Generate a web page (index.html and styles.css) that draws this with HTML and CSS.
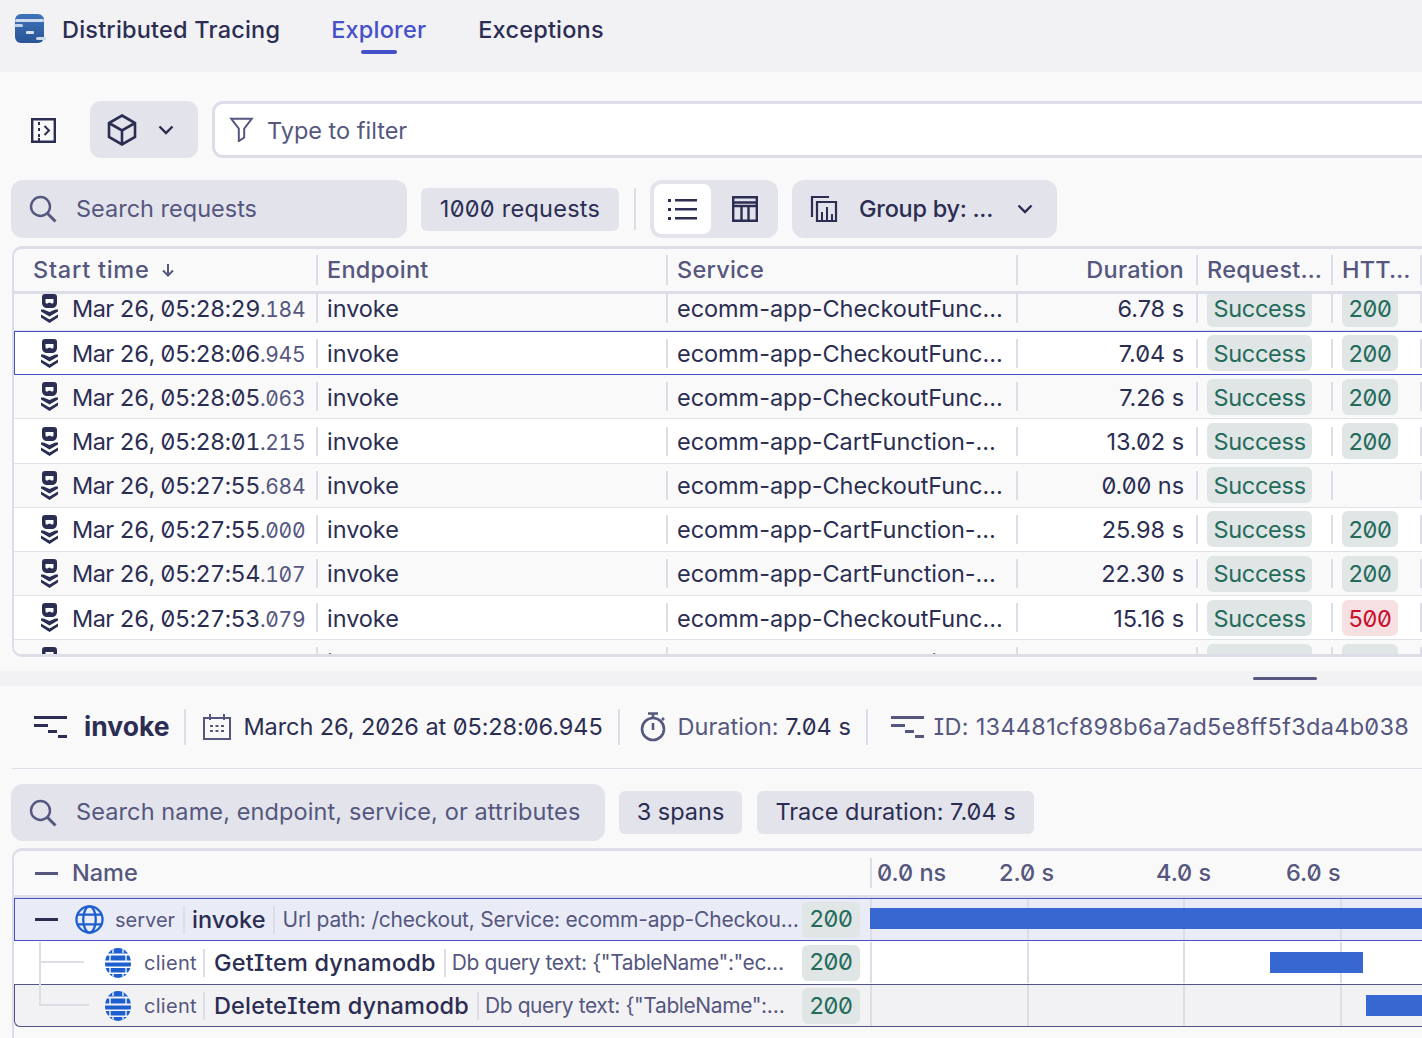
FILE: index.html
```html
<!DOCTYPE html>
<html lang="en">
<head>
<meta charset="utf-8">
<title>Distributed Tracing</title>
<link rel="stylesheet" href="styles.css">
</head>
<body>
<svg class="defs" aria-hidden="true">
  <defs>
    <linearGradient id="logo-grad" x1="0" y1="0" x2="0" y2="1"><stop offset="0" stop-color="#3f74ba"/><stop offset="1" stop-color="#2a5496"/></linearGradient>
    <clipPath id="db-clip"><ellipse cx="13" cy="15" rx="13" ry="15"/></clipPath>
  </defs>
  <symbol id="i-span" viewBox="0 0 17 29">
    <path fill="currentColor" d="M4 0h9a3 3 0 0 1 3 3v6c0 3-2.500 5-5 5H6c-2.500 0-5-2-5-5V3a3 3 0 0 1 3-3z"/>
    <path fill="#fff" d="M4.500 5h8v3c0 1-.7 1.600-1.400 1.600C9.900 9.600 9.500 8.500 8.500 8.500s-1.400 1.100-2.600 1.100C5.200 9.600 4.500 9 4.500 8z"/>
    <path fill="currentColor" d="M0 15.500h2.500L8.500 18l6-2.500H17v2l-8.500 5-8.500-5zM0 20.500l8.500 5 8.500-5v3l-8.500 5.500L0 23.500z"/>
  </symbol>
  <symbol id="i-search" viewBox="0 0 28 28"><circle cx="11.500" cy="11.500" r="9.500" fill="none" stroke="currentColor" stroke-width="2.400"/><path d="M18.500 18.500l8 8" stroke="currentColor" stroke-width="3" fill="none"/></symbol>
  <symbol id="i-chev" viewBox="0 0 16 10"><path d="M1.500 1.500L8 8l6.500-6.500" fill="none" stroke="currentColor" stroke-width="2.400"/></symbol>
  <symbol id="i-trace" viewBox="0 0 34 22"><path fill="currentColor" d="M0 0h33v3H0zM0 8h14v3H0zM14 14h9v3h-9zM24 19h9v3h-9z"/></symbol>
  <symbol id="i-globe" viewBox="0 0 30 30"><g fill="none" stroke="#1e5fd0" stroke-width="2.400"><circle cx="15" cy="15" r="13.500"/><ellipse cx="15" cy="15" rx="6.500" ry="13.500"/><path d="M2.500 10h25M2.500 20h25"/></g></symbol>
  <symbol id="i-db" viewBox="0 0 26 30"><g clip-path="url(#db-clip)"><path fill="#1e5fd0" d="M0 0h26v5.500H0zM0 7.500h26v5H0zM0 14.500h26v4H0zM0 20h26v4.500H0zM0 26h26v4H0z"/><path stroke="#fff" stroke-width="1.300" fill="none" d="M8 0v5M18 0v5M5 7v6M21 7v6M5 20v5M21 20v5M8 26v4M18 26v4"/></g></symbol>
</svg>

<header class="topbar">
  <svg class="logo" viewBox="0 0 32 30" aria-hidden="true">
    <rect x="1" y="0" width="29" height="29" rx="6" fill="url(#logo-grad)"/>
    <rect x="1" y="5" width="29" height="3" rx="1.500" fill="#cddbec"/>
    <rect x="0" y="10" width="9" height="3" rx="1.500" fill="#c3d4e8"/>
    <rect x="12" y="17" width="8" height="3" rx="1" fill="#d6e1ef"/>
    <rect x="22" y="23" width="10" height="3" rx="1.500" fill="#c9d8ea"/>
  </svg>
  <h1 class="app-title">Distributed Tracing</h1>
  <nav class="tabs">
    <a class="tab tab-active">Explorer</a>
    <a class="tab">Exceptions</a>
  </nav>
</header>

<main class="upper">
  <div class="filter-bar">
    <button class="plain-btn" aria-label="Toggle sidebar">
      <svg class="ic-25" viewBox="0 0 25 25"><path fill="none" stroke="currentColor" stroke-width="2.400" d="M1.200 1.200h22.600v22.600H1.200z"/><path fill="none" stroke="currentColor" stroke-width="2" d="M8 4v3M8 10v3M8 16v3M8 20v3M13.500 8l4.500 4.500-4.500 4.500"/></svg>
    </button>
    <button class="entity-btn" aria-label="Entity">
      <svg class="ic-cube" viewBox="0 0 30 32"><path fill="none" stroke="currentColor" stroke-width="2.600" d="M15 1.500l13 7.500v14l-13 7.500L2 23V9zM2 9l13 7.500L28 9M15 16.500v14"/></svg>
      <svg class="ic-chev"><use href="#i-chev"/></svg>
    </button>
    <div class="filter-input">
      <svg class="ic-25" viewBox="0 0 26 28"><path fill="none" stroke="currentColor" stroke-width="2.200" d="M1.500 2h23L16 13v10l-6 4V13z"/></svg>
      <span class="placeholder">Type to filter</span>
    </div>
  </div>

  <div class="tool-bar">
    <div class="search search-req">
      <svg class="ic-search"><use href="#i-search"/></svg>
      <span class="placeholder">Search requests</span>
    </div>
    <span class="chip chip-req">1000 requests</span>
    <span class="vsep"></span>
    <div class="toggle">
      <button class="toggle-btn toggle-on" aria-label="List">
        <svg class="ic-30" viewBox="0 0 30 24"><path fill="currentColor" d="M0 2h3v3H0zM7 2h22v2.600H7zM0 11h3v3H0zM7 11h22v2.600H7zM0 20h3v3H0zM7 20h22v2.600H7z"/></svg>
      </button>
      <button class="toggle-btn" aria-label="Table">
        <svg class="ic-table" viewBox="0 0 26 26"><path fill="none" stroke="currentColor" stroke-width="2.400" d="M1.200 1.200h23.600v23.600H1.200zM1.200 6.500h23.600M1.200 10h23.600M9.500 10v15M16.500 10v15"/></svg>
      </button>
    </div>
    <button class="group-btn">
      <svg class="ic-28" viewBox="0 0 28 28"><path fill="none" stroke="currentColor" stroke-width="2.200" d="M19 2H2v20M7 7h19v19H7z"/><path fill="none" stroke="currentColor" stroke-width="2" d="M12 26V17M17 26V12M22 26v-7"/></svg>
      <span class="group-label">Group by: ...</span>
      <svg class="ic-chev"><use href="#i-chev"/></svg>
    </button>
  </div>

  <section class="req-table">
    <div class="req-row req-head">
      <div class="cell first head-first"><span class="head-start">Start time</span>
        <svg class="ic-arrow" viewBox="0 0 14 14"><path fill="none" stroke="currentColor" stroke-width="2" d="M7 1v11M2 7.500l5 5 5-5"/></svg>
      </div>
      <div class="cell">Endpoint</div>
      <div class="cell">Service</div>
      <div class="cell num">Duration</div>
      <div class="cell">Request…</div>
      <div class="cell">HTT…</div>
      <div class="cell"></div>
    </div>
    <div class="req-body">
      <div class="req-row row-alt row-scrolled">
        <div class="cell first"><svg class="ic-span"><use href="#i-span"/></svg><span class="stamp">Mar 26, 05:28:29<small>.184</small></span></div>
        <div class="cell">invoke</div><div class="cell">ecomm-app-CheckoutFunc…</div><div class="cell num">6.78 s</div>
        <div class="cell"><span class="tag ok">Success</span></div><div class="cell"><span class="tag ok">200</span></div><div class="cell"></div>
      </div>
      <div class="req-row row-selected">
        <div class="cell first"><svg class="ic-span"><use href="#i-span"/></svg><span class="stamp">Mar 26, 05:28:06<small>.945</small></span></div>
        <div class="cell">invoke</div><div class="cell">ecomm-app-CheckoutFunc…</div><div class="cell num">7.04 s</div>
        <div class="cell"><span class="tag ok">Success</span></div><div class="cell"><span class="tag ok">200</span></div><div class="cell"></div>
      </div>
      <div class="req-row row-alt">
        <div class="cell first"><svg class="ic-span"><use href="#i-span"/></svg><span class="stamp">Mar 26, 05:28:05<small>.063</small></span></div>
        <div class="cell">invoke</div><div class="cell">ecomm-app-CheckoutFunc…</div><div class="cell num">7.26 s</div>
        <div class="cell"><span class="tag ok">Success</span></div><div class="cell"><span class="tag ok">200</span></div><div class="cell"></div>
      </div>
      <div class="req-row">
        <div class="cell first"><svg class="ic-span"><use href="#i-span"/></svg><span class="stamp">Mar 26, 05:28:01<small>.215</small></span></div>
        <div class="cell">invoke</div><div class="cell">ecomm-app-CartFunction-…</div><div class="cell num">13.02 s</div>
        <div class="cell"><span class="tag ok">Success</span></div><div class="cell"><span class="tag ok">200</span></div><div class="cell"></div>
      </div>
      <div class="req-row row-alt">
        <div class="cell first"><svg class="ic-span"><use href="#i-span"/></svg><span class="stamp">Mar 26, 05:27:55<small>.684</small></span></div>
        <div class="cell">invoke</div><div class="cell">ecomm-app-CheckoutFunc…</div><div class="cell num">0.00 ns</div>
        <div class="cell"><span class="tag ok">Success</span></div><div class="cell"></div><div class="cell"></div>
      </div>
      <div class="req-row">
        <div class="cell first"><svg class="ic-span"><use href="#i-span"/></svg><span class="stamp">Mar 26, 05:27:55<small>.000</small></span></div>
        <div class="cell">invoke</div><div class="cell">ecomm-app-CartFunction-…</div><div class="cell num">25.98 s</div>
        <div class="cell"><span class="tag ok">Success</span></div><div class="cell"><span class="tag ok">200</span></div><div class="cell"></div>
      </div>
      <div class="req-row row-alt">
        <div class="cell first"><svg class="ic-span"><use href="#i-span"/></svg><span class="stamp">Mar 26, 05:27:54<small>.107</small></span></div>
        <div class="cell">invoke</div><div class="cell">ecomm-app-CartFunction-…</div><div class="cell num">22.30 s</div>
        <div class="cell"><span class="tag ok">Success</span></div><div class="cell"><span class="tag ok">200</span></div><div class="cell"></div>
      </div>
      <div class="req-row">
        <div class="cell first"><svg class="ic-span"><use href="#i-span"/></svg><span class="stamp">Mar 26, 05:27:53<small>.079</small></span></div>
        <div class="cell">invoke</div><div class="cell">ecomm-app-CheckoutFunc…</div><div class="cell num">15.16 s</div>
        <div class="cell"><span class="tag ok">Success</span></div><div class="cell"><span class="tag err">500</span></div><div class="cell"></div>
      </div>
      <div class="req-row row-alt">
        <div class="cell first"><svg class="ic-span"><use href="#i-span"/></svg><span class="stamp">Mar 26, 05:27:53<small>.012</small></span></div>
        <div class="cell">invoke</div><div class="cell">ecomm-app-CartFunction-…</div><div class="cell num">27.12 s</div>
        <div class="cell"><span class="tag ok">Success</span></div><div class="cell"><span class="tag ok">200</span></div><div class="cell"></div>
      </div>
    </div>
  </section>
</main>

<div class="splitter"><span class="handle"></span></div>

<section class="lower">
  <div class="trace-head">
    <svg class="ic-trace"><use href="#i-trace"/></svg>
    <strong class="trace-name">invoke</strong>
    <span class="hsep"></span>
    <svg class="ic-cal" viewBox="0 0 28 26"><path fill="none" stroke="currentColor" stroke-width="2" d="M1 4h26v21H1zM7 0v6M21 0v6"/><path fill="currentColor" d="M7 11h3v2H7zM12.500 11h3v2h-3zM18 11h3v2h-3zM7 16h3v2H7zM12.500 16h3v2h-3zM18 16h3v2h-3z"/></svg>
    <span class="trace-date">March 26, 2026 at 05:28:06.945</span>
    <span class="hsep"></span>
    <svg class="ic-watch" viewBox="0 0 26 30"><circle cx="13" cy="17" r="11" fill="none" stroke="currentColor" stroke-width="2.600"/><path fill="none" stroke="currentColor" stroke-width="2.600" d="M8 1.500h10M13 2v4M13 11v7M22 6l2 2"/></svg>
    <span class="trace-meta">Duration: <b>7.04 s</b></span>
    <span class="hsep"></span>
    <svg class="ic-trace ic-trace-sec"><use href="#i-trace"/></svg>
    <span class="trace-meta trace-id">ID: 134481cf898b6a7ad5e8ff5f3da4b038</span>
    <svg class="ic-copy" viewBox="0 0 20 20"><path fill="none" stroke="currentColor" stroke-width="2.400" d="M1 1h18v18H1z"/></svg>
  </div>

  <div class="tool-bar tool-bar-lower">
    <div class="search search-span">
      <svg class="ic-search"><use href="#i-search"/></svg>
      <span class="placeholder">Search name, endpoint, service, or attributes</span>
    </div>
    <span class="chip chip-spans">3 spans</span>
    <span class="chip chip-dur">Trace duration: 7.04 s</span>
  </div>

  <section class="span-table">
    <div class="span-row span-head">
      <div class="span-name"><span class="dash dash-head"></span><span class="head-name">Name</span></div>
      <div class="axis">
        <span class="tick" style="left:5px">0.0 ns</span>
        <span class="tick" style="left:127px">2.0 s</span>
        <span class="tick" style="left:284px">4.0 s</span>
        <span class="tick" style="left:414px">6.0 s</span>
      </div>
    </div>
    <div class="span-row span-root">
      <div class="span-name">
        <span class="dash"></span>
        <svg class="ic-globe"><use href="#i-globe"/></svg>
        <span class="kind">server</span>
        <span class="nm">invoke</span>
        <span class="desc">Url path: /checkout, Service: ecomm-app-Checkou…</span>
        <span class="tag ok span-tag">200</span>
      </div>
      <div class="gantt"><span class="bar" style="left:0;width:553px"></span></div>
    </div>
    <div class="span-row span-child">
      <div class="span-name">
        <span class="tree tree-a"></span>
        <svg class="ic-db"><use href="#i-db"/></svg>
        <span class="kind">client</span>
        <span class="nm">GetItem dynamodb</span>
        <span class="desc">Db query text: {"TableName":"ec…</span>
        <span class="tag ok span-tag">200</span>
      </div>
      <div class="gantt"><span class="bar" style="left:400px;width:93px"></span></div>
    </div>
    <div class="span-row span-child span-hover">
      <div class="span-name">
        <span class="tree tree-b"></span>
        <svg class="ic-db"><use href="#i-db"/></svg>
        <span class="kind">client</span>
        <span class="nm">DeleteItem dynamodb</span>
        <span class="desc">Db query text: {"TableName":…</span>
        <span class="tag ok span-tag">200</span>
      </div>
      <div class="gantt"><span class="bar" style="left:496px;width:60px"></span></div>
    </div>
  </section>
</section>
</body>
</html>
```

FILE: styles.css
```css
:root {
  --ink: #2b2e52;
  --muted: #55577e;
  --line: #dddde8;
  --line-soft: #e1e1ea;
  --fill: #e3e3ec;
  --page: #f9f9fa;
  --band: #f2f2f5;
  --accent: #4650c8;
  --blue: #3767d1;
}
* { box-sizing: border-box; }
html, body { margin: 0; height: 100%; }
body {
  width: 1422px;
  height: 1038px;
  overflow: hidden;
  background: var(--page);
  color: var(--ink);
  font-family: Inter, "Noto Sans", sans-serif;
  font-size: 23.500px;
  font-feature-settings: "zero" 1, "cv08" 1;
  line-height: 1.2;
}
button { font: inherit; color: inherit; border: 0; background: none; padding: 0; cursor: pointer; }
.defs { position: absolute; width: 0; height: 0; }

.topbar { height: 72px; background: var(--band); display: flex; align-items: center; padding-left: 14px; }
.logo { width: 32px; height: 30px; margin-top: -14px; flex: none; }
.app-title { font: inherit; font-weight: 500; margin: -12px 0 0 16px; letter-spacing: .2px; }
.tabs { display: flex; gap: 52px; margin: -12px 0 0 51px; letter-spacing: .2px; }
.tab { position: relative; font-weight: 500; }
.tab-active { color: var(--accent); }
.tab-active::after { content: ""; position: absolute; left: 30px; width: 36px; height: 4px; bottom: -10px; background: var(--accent); border-radius: 2px; }

.upper { height: 599px; overflow: hidden; }
.filter-bar { display: flex; align-items: center; height: 57px; margin-top: 29px; }
.plain-btn { display: flex; margin: 2px 34px 0 31px; }
.ic-25 { width: 25px; height: 25px; flex: none; }
.ic-28 { width: 28px; height: 28px; flex: none; }
.ic-30 { width: 30px; height: 30px; flex: none; }
.ic-cube { width: 30px; height: 32px; flex: none; }
.ic-table { width: 26px; height: 26px; flex: none; }
.ic-chev { width: 16px; height: 10px; flex: none; }
.entity-btn { display: flex; align-items: center; gap: 21px; width: 108px; height: 57px; padding-left: 17px; background: var(--fill); border-radius: 11px; }
.filter-input { flex: 1; margin-left: 14px; margin-right: -20px; height: 57px; background: #fff; border: 3px solid var(--line); border-radius: 11px; display: flex; align-items: center; gap: 13px; padding-left: 14px; color: var(--muted); }
.filter-input .placeholder { padding-top: 3px; }
.placeholder { color: var(--muted); }

.tool-bar { display: flex; align-items: center; margin-top: 22px; padding-left: 11px; height: 58px; }
.search { display: flex; align-items: center; background: var(--fill); border-radius: 12px; height: 58px; padding-left: 18px; gap: 19px; color: var(--muted); }
.ic-search { width: 28px; height: 28px; flex: none; }
.search-req { width: 396px; }
.chip { display: flex; align-items: center; justify-content: center; height: 43px; background: var(--fill); border-radius: 6px; }
.chip-req { width: 198px; margin-left: 14px; letter-spacing: .25px; }
.vsep { width: 2px; height: 42px; background: var(--line); margin: 0 14px 0 15px; }
.toggle { display: flex; align-items: center; width: 128px; height: 58px; background: var(--fill); border-radius: 12px; padding: 4px; gap: 5px; }
.toggle-btn { width: 57px; height: 50px; display: flex; align-items: center; justify-content: center; border-radius: 8px; }
.toggle-on { background: #fff; }
.group-btn { display: flex; align-items: center; width: 265px; height: 58px; margin-left: 14px; padding-left: 18px; background: var(--fill); border-radius: 12px; font-weight: 500; }
.group-label { margin: 0 24px 0 21px; white-space: nowrap; letter-spacing: -.28px; }

.req-table { margin: 8px -20px 0 12px; height: 411px; border: 3px solid var(--line); border-left-width: 2px; border-right: 0; border-radius: 10px 0 0 10px; overflow: hidden; }
.req-row { display: grid; grid-template-columns: 302px 350px 350px 180px 135px 89px 21px; height: 44.170px; align-items: center; }
.req-head { height: 45px; border-bottom: 3px solid var(--line); color: var(--muted); font-weight: 500; letter-spacing: .25px; }
.req-head .cell { height: 30px; }
.head-start { letter-spacing: .75px; }
.req-body { height: 360px; overflow: hidden; background: #fff; }
.row-scrolled { margin-top: -7px; }
.req-body .req-row { border-bottom: 1.500px solid var(--line-soft); }
.req-body .cell { padding-top: 2px; letter-spacing: -.05px; }
.row-alt { background: var(--page); }
.row-selected { background: #fff; outline: 1px solid var(--accent); outline-offset: -1px; position: relative; border-bottom: 0 !important; }
.cell { display: flex; align-items: center; height: 29px; padding-left: 9px; border-left: 2px solid var(--line); white-space: nowrap; min-width: 0; }
.cell.first { border-left: 0; padding-left: 27px; gap: 14px; }
.cell.head-first { padding-left: 19px; gap: 11px; }
.cell.num { justify-content: flex-end; padding-right: 12px; }
.stamp { font-feature-settings: "zero" 1, "tnum" 1; letter-spacing: -.55px; }
.cell small { font-size: 21px; color: var(--muted); letter-spacing: -.3px; }
.ic-span { width: 17px; height: 29px; flex: none; color: var(--ink); margin-top: -2px; }
.ic-arrow { width: 14px; height: 14px; }
.tag { display: inline-flex; align-items: center; justify-content: center; height: 36px; padding: 0 6.500px; border-radius: 6px; letter-spacing: -.3px; }
.req-body .tag { margin-top: -2px; padding-top: 2px; }
.ok { background: #e0e6e5; color: #246b5c; }
.err { background: #f7e0e2; color: #c8102e; }

.splitter { height: 15px; background: var(--band); position: relative; }
.handle { position: absolute; left: 1253px; top: 6px; width: 64px; height: 3px; background: var(--muted); border-radius: 2px; }

.lower { padding-left: 12px; }
.trace-head { display: flex; align-items: center; height: 83px; border-bottom: 1.500px solid var(--line); padding-left: 22px; white-space: nowrap; }
.ic-trace { width: 34px; height: 22px; flex: none; }
.trace-name { font-weight: 700; margin-left: 16px; font-size: 26.500px; }
.hsep { width: 2px; height: 36px; background: var(--line); margin: 0 15px; flex: none; }
.ic-cal { width: 28px; height: 28px; margin: 0 12px 0 2px; color: var(--muted); flex: none; }
.trace-date { letter-spacing: -.07px; }
.ic-watch { width: 26px; height: 30px; margin: 0 12px 0 5px; color: var(--muted); flex: none; }
.trace-meta { color: var(--muted); }
.trace-meta b { font-weight: 400; color: var(--ink); }
.ic-trace-sec { margin: 0 9px 0 8px; color: var(--muted); }
.trace-id { letter-spacing: .3px; }
.ic-copy { width: 20px; height: 20px; margin: 0 0 12px 14px; color: var(--muted); flex: none; }

.tool-bar-lower { margin-top: 15px; padding-left: 0; height: 57px; margin-left: -1px; }
.search-span { width: 594px; height: 57px; letter-spacing: .11px; }
.chip-spans { width: 123px; margin-left: 14px; }
.chip-dur { width: 277px; margin-left: 15px; }

.span-table { margin-top: 7px; height: 200px; border-left: 2px solid var(--line); border-top: 3px solid var(--line); border-radius: 10px 0 0 0; }
.span-row { display: grid; grid-template-columns: 855px 553px; height: 43px; border: 1px solid transparent; border-right: 0; }
.span-head { height: 47px; border: 0; border-bottom: 3px solid var(--line); color: var(--muted); grid-template-columns: 856px 553px; }
.span-name { display: flex; align-items: center; white-space: nowrap; min-width: 0; padding-left: 20px; position: relative; }
.dash { width: 23px; height: 3px; background: var(--ink); margin-right: 17px; flex: none; }
.dash-head { background: var(--muted); margin-left: 1px; }
.head-name { margin-left: -3px; font-weight: 500; }
.axis { position: relative; border-left: 2px solid var(--line); margin: 7px 0; }
.tick { position: absolute; top: 1px; color: var(--muted); font-weight: 500; }
.span-root { background: #e9ebf6; border-color: var(--accent); }
.span-child { background: #fff; }
.span-hover { background: var(--band); border-color: #52548a; border-radius: 0 0 0 6px; }
.span-hover .span-name { padding-top: 1px; }
.ic-globe { width: 29px; height: 29px; flex: none; }
.ic-db { width: 26px; height: 30px; flex: none; margin-left: 70px; }
.kind { font-size: 20px; color: var(--muted); margin-left: 11px; padding-right: 8px; border-right: 2px solid var(--line); line-height: 28px; }
.nm { font-weight: 500; padding: 0 8px 0 7px; border-right: 2px solid var(--line); line-height: 28px; }
.desc { flex: 1; font-size: 21px; color: var(--muted); padding-left: 7px; overflow: hidden; min-width: 0; letter-spacing: -.2px; }
.span-child .kind { margin-left: 13px; letter-spacing: .3px; padding-right: 6px; }
.span-child .nm { letter-spacing: .18px; padding-left: 9px; }
.span-child .desc { letter-spacing: -.4px; padding-left: 6px; }
.span-tag { flex: none; margin-right: 10px; width: 58px; }
.gantt { position: relative; background-image: repeating-linear-gradient(90deg, var(--line) 0 2px, transparent 2px 156.670px); }
.bar { position: absolute; top: 10px; height: 21px; background: var(--blue); }
.span-root .bar { top: 9px; }
.tree { position: absolute; left: 24px; border-left: 2px solid var(--line); border-bottom: 2px solid var(--line); }
.tree-a { top: 0; width: 45px; height: 21px; }
.tree-b { top: -22px; width: 50px; height: 43px; }
```
